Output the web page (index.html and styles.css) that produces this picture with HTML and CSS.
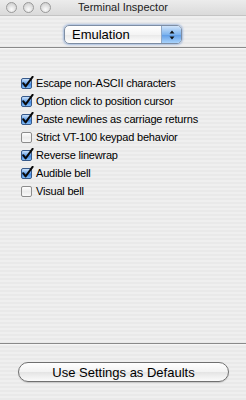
FILE: index.html
```html
<!DOCTYPE html>
<html lang="en">
<head>
    <meta charset="UTF-8">
    <meta name="viewport" content="width=device-width, initial-scale=1.0">
    <title>Terminal Inspector</title>
    <link rel="stylesheet" href="styles.css">
</head>
<body>
    <div class="window">
        <div class="titlebar">
            <div class="lights">
                <span class="light"></span>
                <span class="light"></span>
                <span class="light"></span>
            </div>
            <div class="title">Terminal Inspector</div>
        </div>

        <div class="popup-row">
            <div class="popup">
                <span class="popup-label">Emulation</span>
                <span class="popup-arrows">
                    <svg width="8" height="12" viewBox="0 0 8 12">
                        <path d="M4 1.5 L6.5 4.5 L1.5 4.5 Z" fill="#111"/>
                        <path d="M4 10.5 L6.5 7.5 L1.5 7.5 Z" fill="#111"/>
                    </svg>
                </span>
            </div>
        </div>
        <div class="separator"></div>

        <ul class="options">
            <li class="option checked">Escape non-ASCII characters</li>
            <li class="option checked">Option click to position cursor</li>
            <li class="option checked">Paste newlines as carriage returns</li>
            <li class="option">Strict VT-100 keypad behavior</li>
            <li class="option checked">Reverse linewrap</li>
            <li class="option checked">Audible bell</li>
            <li class="option">Visual bell</li>
        </ul>

        <div class="separator bottom"></div>
        <div class="footer">
            <button class="defaults-btn">Use Settings as Defaults</button>
        </div>
    </div>

    <script>
        // draw the aqua checkboxes in front of each option
        const box = '<svg class="box" width="14" height="14" viewBox="0 0 14 14">' +
            '<defs><linearGradient id="blue" x1="0" y1="0" x2="0" y2="1">' +
            '<stop offset="0" stop-color="#d6e8fb"/><stop offset="0.45" stop-color="#6fa8ec"/>' +
            '<stop offset="0.55" stop-color="#3f86e4"/><stop offset="1" stop-color="#8cc4f7"/></linearGradient>' +
            '<linearGradient id="grey" x1="0" y1="0" x2="0" y2="1">' +
            '<stop offset="0" stop-color="#ffffff"/><stop offset="0.5" stop-color="#ececec"/>' +
            '<stop offset="1" stop-color="#fafafa"/></linearGradient></defs>';
        const checkedBox = box +
            '<rect x="1.5" y="2.5" width="10" height="10" rx="1.5" fill="url(#blue)" stroke="#37598a"/>' +
            '<path d="M3.2 7.2 L5.6 10.4 L12.6 0.8" fill="none" stroke="#0a0a0a" stroke-width="2" stroke-linecap="round" stroke-linejoin="round"/></svg>';
        const emptyBox = box +
            '<rect x="1.5" y="2.5" width="10" height="10" rx="1.5" fill="url(#grey)" stroke="#8c8c8c"/></svg>';

        document.querySelectorAll('.option').forEach(function (item) {
            const isChecked = item.classList.contains('checked');
            item.insertAdjacentHTML('afterbegin', isChecked ? checkedBox : emptyBox);
        });
    </script>
</body>
</html>
```

FILE: styles.css
```css
html, body {
    margin: 0;
    padding: 0;
    height: 100%;
}

body {
    font-family: "Liberation Sans", Arial, sans-serif;
    color: #000;
    background: repeating-linear-gradient(
        180deg,
        #efefef,
        #efefef 2px,
        #e9e9e9 2px,
        #e9e9e9 4px
    );
}

.window {
    display: flex;
    flex-direction: column;
    height: 100vh;
}

.titlebar {
    position: relative;
    height: 15px;
    border-bottom: 1px solid #c4c4c4;
    background: linear-gradient(180deg, #ececec, #dadada);
    display: flex;
    align-items: center;
}

.lights {
    display: flex;
    gap: 6px;
    padding-left: 6px;
}

.light {
    width: 9px;
    height: 9px;
    border-radius: 50%;
    border: 1px solid #9a9a9a;
    background: radial-gradient(circle at 50% 70%, #fbfbfb, #d6d6d6 70%, #c4c4c4);
}

.title {
    position: absolute;
    left: 0;
    right: 0;
    top: 1px;
    text-align: center;
    font-size: 11px;
    color: #222;
    line-height: 13px;
}

.popup-row {
    display: flex;
    justify-content: center;
    padding: 9px 0 3px 0;
}

.popup {
    width: 116px;
    height: 17px;
    display: flex;
    align-items: stretch;
    border: 1px solid #7e8ea4;
    border-radius: 5px;
    background: linear-gradient(180deg, #ffffff, #f4f4f4 50%, #e8e8e8 51%, #ffffff);
    box-shadow: 0 0 2px 1px rgba(110, 150, 210, 0.55);
    overflow: hidden;
}

.popup-label {
    flex: 1;
    font-size: 13px;
    line-height: 17px;
    padding-left: 7px;
}

.popup-arrows {
    width: 19px;
    display: flex;
    align-items: center;
    justify-content: center;
    border-left: 1px solid #8fa7c6;
    background: linear-gradient(180deg, #cfe3fa, #7eb4ee 50%, #5d9be6 51%, #a9d3fb);
}

.separator {
    height: 1px;
    background: #8a8a8a;
    border-bottom: 1px solid #f6f6f6;
}

.options {
    list-style: none;
    margin: 0;
    padding: 25px 0 0 20px;
    flex: 1;
}

.option {
    height: 18px;
    display: flex;
    align-items: center;
    gap: 2px;
    font-size: 11px;
    letter-spacing: -0.2px;
}

.box {
    flex-shrink: 0;
}

.footer {
    display: flex;
    padding: 17px 17px 18px 18px;
}

.defaults-btn {
    flex: 1;
    height: 20px;
    font-family: "Liberation Sans", Arial, sans-serif;
    font-size: 13px;
    color: #000;
    border: 1px solid #707070;
    border-radius: 10px;
    background: linear-gradient(180deg, #ffffff, #f2f2f2 50%, #e4e4e4 51%, #fbfbfb);
    box-shadow: 0 1px 1px rgba(0, 0, 0, 0.15);
    padding: 0;
}
```
